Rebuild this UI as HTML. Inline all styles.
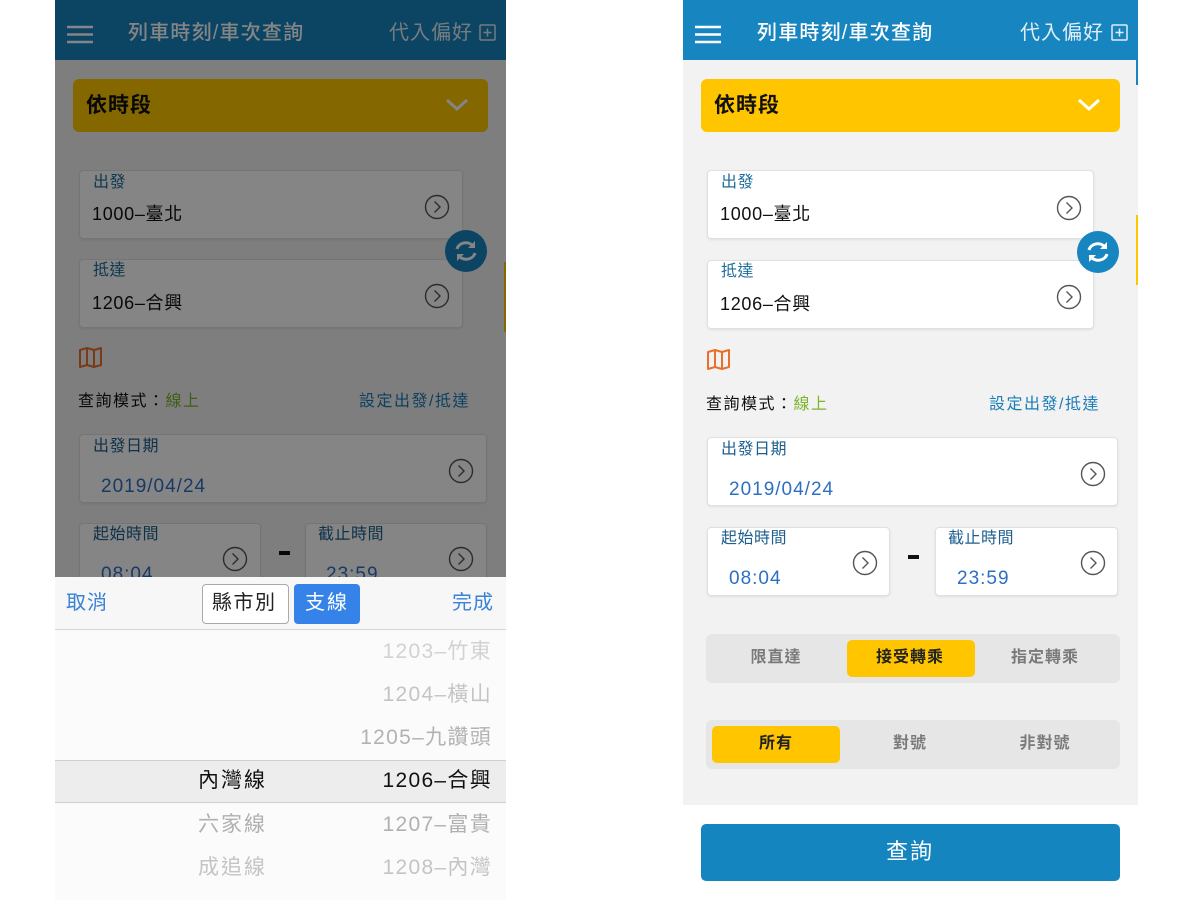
<!DOCTYPE html>
<html><head><meta charset="utf-8">
<style>
*{margin:0;padding:0;box-sizing:border-box}
body{width:1200px;height:900px;background:#fff;position:relative;overflow:hidden;font-family:"Liberation Sans","Noto Sans CJK TC",sans-serif}
.ph{position:absolute;top:0;width:455px;height:900px;overflow:hidden}
.ph div,.ph span,.ph svg{position:absolute}
.hd{left:0;top:0;width:455px;height:60px;background:#1785c0}
.bg{left:0;top:60px;width:455px;height:745px;background:#f2f2f2}
.t{white-space:nowrap;line-height:1}
.card{background:#fff;border:1px solid #e0e0e0;border-radius:4px;box-shadow:0 1px 2px rgba(0,0,0,.08)}
.lbl{font-size:16px;color:#1d6c9c;letter-spacing:.5px}
.val{font-size:18px;color:#111;letter-spacing:.7px}
.dv{font-size:19px;color:#2e6fc2;letter-spacing:1px}
.seg{background:#e6e6e6;border-radius:6px}
.act{background:#ffc600;border-radius:5px}
.sg{font-size:16px;font-weight:bold;color:#7a7a7a;transform:translateX(-50%);letter-spacing:1px}
.pk{font-size:21px;color:#c9c9c9;right:14px;letter-spacing:1.3px}
.ttl{font-size:20px;color:#fff;font-weight:500;letter-spacing:1.2px}
.md{font-size:16px;letter-spacing:1.5px}
</style></head><body>

<!-- RIGHT PHONE -->
<div class="ph" style="left:683px">
 <div class="hd"></div>
 <div class="bg"></div>
 <svg style="left:12px;top:25px" width="26" height="19"><g stroke="#fff" stroke-width="2.4"><line x1="0" y1="2" x2="26" y2="2"/><line x1="0" y1="9.5" x2="26" y2="9.5"/><line x1="0" y1="17" x2="26" y2="17"/></g></svg>
 <div class="t ttl" style="left:74px;top:23px">列車時刻/車次查詢</div>
 <div class="t" style="left:337px;top:23px;font-size:20px;color:#e0edf5;letter-spacing:1px">代入偏好</div>
 <svg style="left:428px;top:24px" width="18" height="18"><rect x="1" y="1" width="15" height="15" fill="none" stroke="#e0edf5" stroke-width="1.5" rx="1"/><path d="M8.5 4.5v8M4.5 8.5h8" stroke="#e0edf5" stroke-width="1.5"/></svg>
 <div style="left:453px;top:60px;width:2px;height:25px;background:#1785c0"></div>
 <div style="left:18px;top:79px;width:419px;height:53px;background:#ffc600;border-radius:6px"></div>
 <div class="t" style="left:31px;top:95px;font-size:21px;font-weight:bold;color:#111;letter-spacing:1px">依時段</div>
 <svg style="left:394px;top:98px" width="24" height="14"><path d="M2 2l10 9 10-9" fill="none" stroke="#fff" stroke-width="3"/></svg>

 <div class="card" style="left:24px;top:170px;width:387px;height:69px"></div>
 <div class="t lbl" style="left:38px;top:175px">出發</div>
 <div class="t val" style="left:37px;top:205px">1000–臺北</div>
 <svg style="left:373px;top:195px" width="26" height="26"><circle cx="13" cy="13" r="11.5" fill="none" stroke="#555" stroke-width="1.4"/><path d="M10.5 7.5l5.5 5.5-5.5 5.5" fill="none" stroke="#555" stroke-width="1.4"/></svg>
 <div class="card" style="left:24px;top:260px;width:387px;height:69px"></div>
 <div class="t lbl" style="left:38px;top:264px">抵達</div>
 <div class="t val" style="left:37px;top:295px">1206–合興</div>
 <svg style="left:373px;top:284px" width="26" height="26"><circle cx="13" cy="13" r="11.5" fill="none" stroke="#555" stroke-width="1.4"/><path d="M10.5 7.5l5.5 5.5-5.5 5.5" fill="none" stroke="#555" stroke-width="1.4"/></svg>
 <svg style="left:394px;top:231px" width="42" height="42"><circle cx="21" cy="21" r="21" fill="#1785c0"/><path d="M12 19a9 8 0 0 1 16-3" fill="none" stroke="#fff" stroke-width="3"/><path d="M30 11v7h-7z" fill="#fff"/><path d="M30 23a9 8 0 0 1-16 3" fill="none" stroke="#fff" stroke-width="3"/><path d="M12 31v-7h7z" fill="#fff"/></svg>
 <div style="left:453px;top:215px;width:2px;height:70px;background:#ffc600"></div>

 <svg style="left:23px;top:348px" width="26" height="23"><path d="M2 4l7-2 7 2 7-2v17l-7 2-7-2-7 2z M9 2v17 M16 4v17" fill="none" stroke="#e8702a" stroke-width="2" stroke-linejoin="round"/></svg>
 <div class="t md" style="left:23px;top:397px;color:#111">查詢模式：<span style="position:static;color:#7bb52c">線上</span></div>
 <div class="t md" style="left:306px;top:397px;color:#1a7cb8">設定出發/抵達</div>

 <div class="card" style="left:24px;top:437px;width:411px;height:69px"></div>
 <div class="t lbl" style="left:38px;top:442px;color:#1d5f8f">出發日期</div>
 <div class="t dv" style="left:46px;top:480px">2019/04/24</div>
 <svg style="left:397px;top:461px" width="26" height="26"><circle cx="13" cy="13" r="11.5" fill="none" stroke="#555" stroke-width="1.4"/><path d="M10.5 7.5l5.5 5.5-5.5 5.5" fill="none" stroke="#555" stroke-width="1.4"/></svg>

 <div class="card" style="left:24px;top:527px;width:183px;height:69px"></div>
 <div class="t lbl" style="left:38px;top:531px;color:#1d5f8f">起始時間</div>
 <div class="t dv" style="left:46px;top:569px">08:04</div>
 <svg style="left:169px;top:550px" width="26" height="26"><circle cx="13" cy="13" r="11.5" fill="none" stroke="#555" stroke-width="1.4"/><path d="M10.5 7.5l5.5 5.5-5.5 5.5" fill="none" stroke="#555" stroke-width="1.4"/></svg>
 <div style="left:225px;top:555px;width:11px;height:4px;background:#111"></div>
 <div class="card" style="left:252px;top:527px;width:183px;height:69px"></div>
 <div class="t lbl" style="left:265px;top:531px;color:#1d5f8f">截止時間</div>
 <div class="t dv" style="left:274px;top:569px">23:59</div>
 <svg style="left:397px;top:550px" width="26" height="26"><circle cx="13" cy="13" r="11.5" fill="none" stroke="#555" stroke-width="1.4"/><path d="M10.5 7.5l5.5 5.5-5.5 5.5" fill="none" stroke="#555" stroke-width="1.4"/></svg>

 <div class="seg" style="left:23px;top:634px;width:414px;height:49px"></div>
 <div class="act" style="left:164px;top:640px;width:128px;height:37px"></div>
 <div class="t sg" style="left:93px;top:650px">限直達</div>
 <div class="t sg" style="left:227px;top:650px;color:#222">接受轉乘</div>
 <div class="t sg" style="left:362px;top:650px">指定轉乘</div>

 <div class="seg" style="left:23px;top:720px;width:414px;height:49px"></div>
 <div class="act" style="left:29px;top:726px;width:128px;height:37px"></div>
 <div class="t sg" style="left:93px;top:736px;color:#222">所有</div>
 <div class="t sg" style="left:227px;top:736px">對號</div>
 <div class="t sg" style="left:362px;top:736px">非對號</div>

 <div style="left:18px;top:824px;width:419px;height:57px;background:#1585bf;border-radius:5px"></div>
 <div class="t" style="left:227px;top:841px;transform:translateX(-50%);font-size:22px;color:#fff;letter-spacing:2px">查詢</div>
</div>

<!-- LEFT PHONE -->
<div class="ph" style="left:55px;width:451px">
 <div class="hd"></div>
 <div class="bg"></div>
 <svg style="left:12px;top:25px" width="26" height="19"><g stroke="#fff" stroke-width="2.4"><line x1="0" y1="2" x2="26" y2="2"/><line x1="0" y1="9.5" x2="26" y2="9.5"/><line x1="0" y1="17" x2="26" y2="17"/></g></svg>
 <div class="t ttl" style="left:73px;top:23px">列車時刻/車次查詢</div>
 <div class="t" style="left:334px;top:23px;font-size:20px;color:#e0edf5;letter-spacing:1px">代入偏好</div>
 <svg style="left:424px;top:24px" width="18" height="18"><rect x="1" y="1" width="15" height="15" fill="none" stroke="#e0edf5" stroke-width="1.5" rx="1"/><path d="M8.5 4.5v8M4.5 8.5h8" stroke="#e0edf5" stroke-width="1.5"/></svg>
 <div style="left:18px;top:79px;width:415px;height:53px;background:#ffc600;border-radius:6px"></div>
 <div class="t" style="left:31px;top:95px;font-size:21px;font-weight:bold;color:#111;letter-spacing:1px">依時段</div>
 <svg style="left:390px;top:98px" width="24" height="14"><path d="M2 2l10 9 10-9" fill="none" stroke="#fff" stroke-width="3"/></svg>
 <div class="card" style="left:24px;top:170px;width:384px;height:69px"></div>
 <div class="t lbl" style="left:38px;top:175px">出發</div>
 <div class="t val" style="left:37px;top:205px">1000–臺北</div>
 <svg style="left:369px;top:194px" width="26" height="26"><circle cx="13" cy="13" r="11.5" fill="none" stroke="#555" stroke-width="1.4"/><path d="M10.5 7.5l5.5 5.5-5.5 5.5" fill="none" stroke="#555" stroke-width="1.4"/></svg>
 <div class="card" style="left:24px;top:259px;width:384px;height:69px"></div>
 <div class="t lbl" style="left:38px;top:263px">抵達</div>
 <div class="t val" style="left:37px;top:294px">1206–合興</div>
 <svg style="left:369px;top:283px" width="26" height="26"><circle cx="13" cy="13" r="11.5" fill="none" stroke="#555" stroke-width="1.4"/><path d="M10.5 7.5l5.5 5.5-5.5 5.5" fill="none" stroke="#555" stroke-width="1.4"/></svg>
 <svg style="left:390px;top:230px" width="42" height="42"><circle cx="21" cy="21" r="21" fill="#1785c0"/><path d="M12 19a9 8 0 0 1 16-3" fill="none" stroke="#fff" stroke-width="3"/><path d="M30 11v7h-7z" fill="#fff"/><path d="M30 23a9 8 0 0 1-16 3" fill="none" stroke="#fff" stroke-width="3"/><path d="M12 31v-7h7z" fill="#fff"/></svg>
 <div style="left:449px;top:262px;width:2px;height:70px;background:#ffc600"></div>
 <svg style="left:23px;top:346px" width="26" height="23"><path d="M2 4l7-2 7 2 7-2v17l-7 2-7-2-7 2z M9 2v17 M16 4v17" fill="none" stroke="#e8702a" stroke-width="2" stroke-linejoin="round"/></svg>
 <div class="t md" style="left:23px;top:394px;color:#111">查詢模式：<span style="position:static;color:#7bb52c">線上</span></div>
 <div class="t md" style="left:304px;top:394px;color:#1a7cb8">設定出發/抵達</div>
 <div class="card" style="left:24px;top:434px;width:408px;height:69px"></div>
 <div class="t lbl" style="left:38px;top:439px;color:#1d5f8f">出發日期</div>
 <div class="t dv" style="left:46px;top:477px">2019/04/24</div>
 <svg style="left:393px;top:458px" width="26" height="26"><circle cx="13" cy="13" r="11.5" fill="none" stroke="#555" stroke-width="1.4"/><path d="M10.5 7.5l5.5 5.5-5.5 5.5" fill="none" stroke="#555" stroke-width="1.4"/></svg>
 <div class="card" style="left:24px;top:523px;width:182px;height:69px"></div>
 <div class="t lbl" style="left:38px;top:527px;color:#1d5f8f">起始時間</div>
 <div class="t dv" style="left:46px;top:565px">08:04</div>
 <svg style="left:167px;top:546px" width="26" height="26"><circle cx="13" cy="13" r="11.5" fill="none" stroke="#555" stroke-width="1.4"/><path d="M10.5 7.5l5.5 5.5-5.5 5.5" fill="none" stroke="#555" stroke-width="1.4"/></svg>
 <div style="left:224px;top:551px;width:11px;height:4px;background:#111"></div>
 <div class="card" style="left:250px;top:523px;width:182px;height:69px"></div>
 <div class="t lbl" style="left:263px;top:527px;color:#1d5f8f">截止時間</div>
 <div class="t dv" style="left:271px;top:565px">23:59</div>
 <svg style="left:393px;top:546px" width="26" height="26"><circle cx="13" cy="13" r="11.5" fill="none" stroke="#555" stroke-width="1.4"/><path d="M10.5 7.5l5.5 5.5-5.5 5.5" fill="none" stroke="#555" stroke-width="1.4"/></svg>
 <!-- dim overlay -->
 <div style="left:0;top:0;width:451px;height:577px;background:rgba(0,0,0,.48)"></div>
 <!-- picker -->
 <div style="left:0;top:577px;width:451px;height:53px;background:#f7f7f7;border-bottom:1px solid #d6d6d6"></div>
 <div class="t" style="left:11px;top:593px;font-size:20px;color:#3a82d6;letter-spacing:1px">取消</div>
 <div style="left:147px;top:584px;width:87px;height:40px;background:#fff;border:1px solid #aaa;border-radius:4px"></div>
 <div class="t" style="left:157px;top:593px;font-size:20px;color:#222;letter-spacing:1.5px">縣市別</div>
 <div style="left:239px;top:584px;width:66px;height:40px;background:#3583e8;border-radius:4px"></div>
 <div class="t" style="left:250px;top:593px;font-size:20px;color:#fff;letter-spacing:2px">支線</div>
 <div class="t" style="left:397px;top:593px;font-size:20px;color:#3a82d6;letter-spacing:1px">完成</div>
 <div style="left:0;top:630px;width:451px;height:270px;background:#fbfbfb"></div>
 <div style="left:0;top:760px;width:451px;height:43px;background:#ededed;border-top:1px solid #d0d0d0;border-bottom:1px solid #d0d0d0"></div>
 <div class="t pk" style="top:641px;color:#d2d2d2">1203–竹東</div>
 <div class="t pk" style="top:684px;color:#c4c4c4">1204–橫山</div>
 <div class="t pk" style="top:727px;color:#b2b2b2">1205–九讚頭</div>
 <div class="t pk" style="top:770px;color:#111">1206–合興</div>
 <div class="t pk" style="top:814px;color:#b0b0b0">1207–富貴</div>
 <div class="t pk" style="top:857px;color:#c4c4c4">1208–內灣</div>
 <div class="t pk" style="top:770px;right:239px;color:#111;letter-spacing:2px">內灣線</div>
 <div class="t pk" style="top:814px;right:239px;color:#b0b0b0;letter-spacing:2px">六家線</div>
 <div class="t pk" style="top:857px;right:239px;color:#c4c4c4;letter-spacing:2px">成追線</div>
</div>
</body></html>
